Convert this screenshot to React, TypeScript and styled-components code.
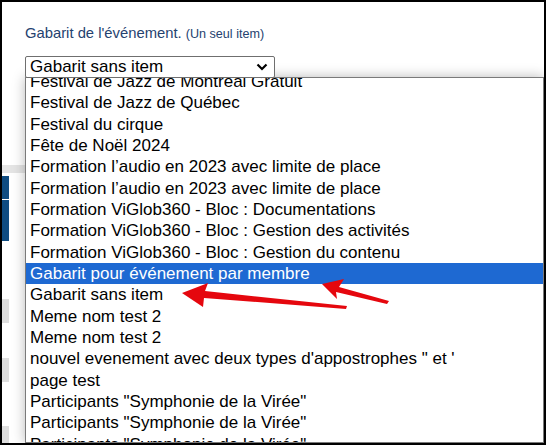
import React from "react";
import styled, { createGlobalStyle } from "styled-components";

const Global = createGlobalStyle`
  html, body { margin: 0; padding: 0; background: #fff; }
  body { font-family: "Liberation Sans", Arial, sans-serif; }
`;

const Frame = styled.div`
  position: relative;
  width: 546px;
  height: 445px;
  box-sizing: border-box;
  border: 2px solid #000;
  background: #fff;
  overflow: hidden;
  display: flex;
  flex-direction: column;
`;

const TopArea = styled.div`
  display: flex;
  flex-direction: column;
  padding: 22px 0 0 23px;
`;

const Title = styled.div`
  font-size: 14.8px;
  line-height: 18px;
  color: #25426f;
  margin-bottom: 13px;
`;

const Hint = styled.span`
  font-size: 12.6px;
`;

const SelectBox = styled.div`
  position: relative;
  z-index: 2;
  width: 250px;
  height: 22px;
  box-sizing: border-box;
  border: 1px solid #6f6f6f;
  border-radius: 2px;
  background: #fff;
  display: flex;
  align-items: center;
  justify-content: space-between;
  padding: 0 6px 0 4px;
  font-size: 17px;
  color: #000;
`;

const Behind = styled.div`
  display: flex;
  flex-direction: column;
  width: 23px;
  margin-top: 87px;
`;

const Band = styled.div`
  height: 8px;
  background: #e4e4e4;
  margin-bottom: 3px;
`;

const Block = styled.div<{ $h: number; $c: string; $gap: number }>`
  width: 7px;
  height: ${(p) => p.$h}px;
  background: ${(p) => p.$c};
  margin-bottom: ${(p) => p.$gap}px;
`;

const Popup = styled.div`
  position: absolute;
  z-index: 1;
  left: 23px;
  top: 75px;
  right: 0;
  bottom: 0;
  box-sizing: border-box;
  border: 1px solid #7a7a7a;
  background: #fff;
  box-shadow: 0 0 12px rgba(0, 0, 0, 0.28);
  overflow: hidden;
`;

const OptionList = styled.ul`
  list-style: none;
  margin: -7px 0 0 0;
  padding: 0;
`;

const Option = styled.li<{ $selected?: boolean }>`
  height: 21.333px;
  line-height: 21.333px;
  padding-left: 4px;
  font-size: 17px;
  white-space: nowrap;
  color: ${(p) => (p.$selected ? "#fff" : "#000")};
  background: ${(p) => (p.$selected ? "#1e69d2" : "transparent")};
`;

const Overlay = styled.svg`
  position: absolute;
  left: -2px;
  top: -2px;
  z-index: 3;
  pointer-events: none;
`;

const options = [
  "Festival de Jazz de Montréal Gratuit",
  "Festival de Jazz de Québec",
  "Festival du cirque",
  "Fête de Noël 2024",
  "Formation l’audio en 2023 avec limite de place",
  "Formation l’audio en 2023 avec limite de place",
  "Formation ViGlob360 - Bloc : Documentations",
  "Formation ViGlob360 - Bloc : Gestion des activités",
  "Formation ViGlob360 - Bloc : Gestion du contenu",
  "Gabarit pour événement par membre",
  "Gabarit sans item",
  "Meme nom test 2",
  "Meme nom test 2",
  "nouvel evenement avec deux types d'appostrophes \" et '",
  "page test",
  "Participants \"Symphonie de la Virée\"",
  "Participants \"Symphonie de la Virée\"",
  "Participants \"Symphonie de la Virée\"",
];

export default function App() {
  return (
    <>
      <Global />
      <Frame>
        <TopArea>
          <Title>
            Gabarit de l'événement. <Hint>(Un seul item)</Hint>
          </Title>
          <SelectBox>
            <span>Gabarit sans item</span>
            <svg width="12" height="8" viewBox="0 0 12 8">
              <path d="M1.5 1.5 L6 6 L10.5 1.5" fill="none" stroke="#000" strokeWidth="2.2" />
            </svg>
          </SelectBox>
        </TopArea>
        <Behind>
          <Band />
          <Block $h={23} $c="#0f4c81" $gap={1} />
          <Block $h={41} $c="#0f4c81" $gap={58} />
          <Block $h={24} $c="#dedede" $gap={35} />
          <Block $h={24} $c="#dedede" $gap={44} />
          <Block $h={24} $c="#dedede" $gap={0} />
        </Behind>
        <Popup>
          <OptionList>
            {options.map((o, i) => (
              <Option key={i} $selected={i === 9}>
                {o}
              </Option>
            ))}
          </OptionList>
        </Popup>
        <Overlay width="546" height="445" viewBox="0 0 546 445">
          <polygon
            fill="#e5070e"
            points="182,293 208,283 205,291 347,306 346,309 204,298 203,307"
          />
          <polygon
            fill="#e5070e"
            points="322,284 344,279 339,287 389,301 387,304 336,292 337,299"
          />
        </Overlay>
      </Frame>
    </>
  );
}
